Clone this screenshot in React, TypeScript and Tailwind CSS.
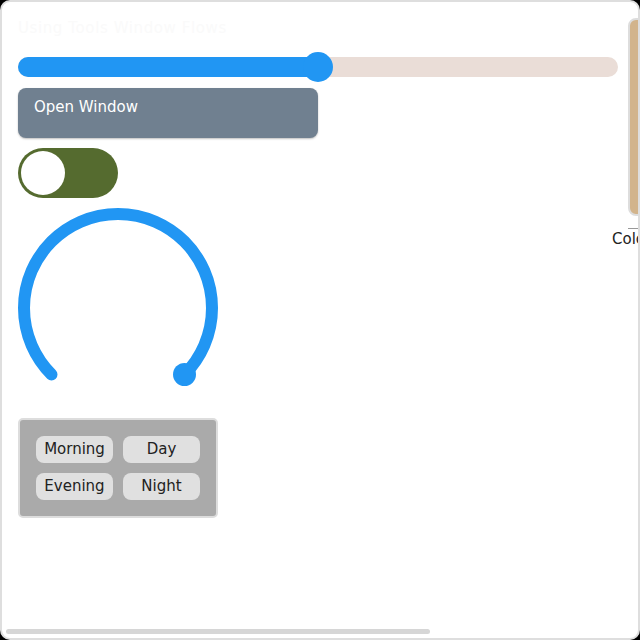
import React from 'react';

const font = { fontFamily: '"DejaVu Sans", sans-serif' };

const Gauge = () => {
  return (
    <svg width="200" height="200" viewBox="0 0 200 200" className="block">
      <path
        d="M 33.5 166.5 A 94 94 0 1 1 166.5 166.5"
        fill="none"
        stroke="#2196f3"
        strokeWidth="12"
        strokeLinecap="round"
      />
      <circle cx="166.5" cy="166.5" r="11.5" fill="#2196f3" />
    </svg>
  );
};

const Segments = () => {
  const items = ['Morning', 'Day', 'Evening', 'Night'];
  return (
    <div className="w-[200px] h-[100px] rounded-[5px] border-2 border-[#dddddd] bg-[#aaaaaa] p-4">
      <div className="grid grid-cols-2 gap-[10px]">
        {items.map((item) => (
          <div
            key={item}
            className="h-[27px] rounded-lg bg-[#e0e0e0] text-[15px] leading-[27px] text-center text-[#222]"
          >
            {item}
          </div>
        ))}
      </div>
    </div>
  );
};

export default function App() {
  return (
    <div className="w-[640px] h-[640px] bg-black" style={font}>
      <div className="relative w-full h-full overflow-hidden rounded-[10px] border-2 border-[#dedede] bg-white">
        <div className="flex pl-4 pt-4">
          <div className="w-[600px] shrink-0 flex flex-col">
            <div className="h-[20px] text-[15px] leading-[20px] tracking-[0.6px] text-[#fafafa]">
              Using Tools Window Flows
            </div>
            {/* slider */}
            <div className="mt-[14px] relative h-[30px] flex items-center">
              <div className="flex w-full h-[20px] rounded-full overflow-hidden bg-[#eaddd7]">
                <div className="w-[300px] h-full bg-[#2196f3]" />
              </div>
              <div className="absolute left-[285px] top-0 w-[30px] h-[30px] rounded-full bg-[#2196f3]" />
            </div>
            <div className="mt-[6px] w-[300px] h-[50px] rounded-lg bg-[#708090] px-4 pt-[9px] text-[15px] leading-[20px] text-white shadow-[0_1px_2px_rgba(0,0,0,0.25)]">
              Open Window
            </div>
            <div className="mt-[10px] w-[100px] h-[50px] rounded-full bg-[#556b2f] p-[3px]">
              <div className="w-[44px] h-[44px] rounded-full bg-white" />
            </div>
            <div className="mt-[10px]">
              <Gauge />
            </div>
            <div className="mt-[10px]">
              <Segments />
            </div>
          </div>
          <div className="ml-[10px] w-[60px] shrink-0 flex flex-col">
            <div className="h-[198px] rounded-lg border-2 border-[#dddddd] bg-[#d2b48c]" />
            <div className="mt-[12px] w-[40px] h-[1px] bg-[#999]" />
            <div className="-ml-4 mt-[1px] text-[15px] leading-[18px] text-[#222]">
              Color
            </div>
          </div>
        </div>
        <div className="absolute left-[4px] bottom-[4px] w-[424px] h-[5px] rounded-full bg-[#d6d6d6]" />
      </div>
    </div>
  );
}
